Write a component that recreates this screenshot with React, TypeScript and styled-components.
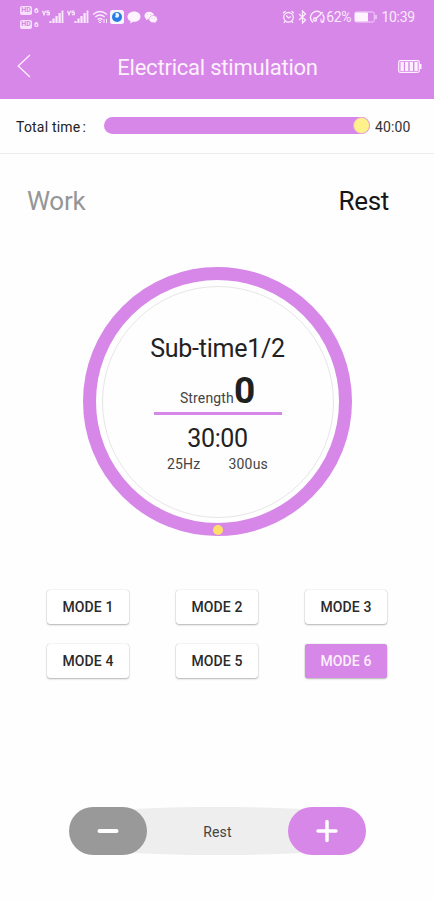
import React from "react";
import styled, { createGlobalStyle } from "styled-components";

const purple = "#d687e7";

const GlobalStyle = createGlobalStyle`
  * { box-sizing: border-box; }
  body { margin: 0; background: #fefefe; font-family: Roboto, "Noto Sans", sans-serif; }
  button { font-family: inherit; border: 0; padding: 0; }
`;

const Screen = styled.main`
  display: flex;
  flex-direction: column;
  width: 434px;
  height: 900px;
  overflow: hidden;
  background: #fefefe;
  color: #222;
`;

const StatusBar = styled.div`
  display: flex;
  justify-content: space-between;
  height: 34px;
  padding: 0 19px 0 20px;
  background: ${purple};
  color: #fbeafd;
`;

const StatusGroup = styled.div`
  display: flex;
  align-items: center;
  height: 34px;
`;

const StatusText = styled.span<{ $gap?: number }>`
  font-size: 14px;
  line-height: 34px;
  letter-spacing: -0.25px;
  margin-left: ${(p) => p.$gap ?? 0}px;
`;

const SimBadges = styled.div`
  display: flex;
  flex-direction: column;
  gap: 5px;
  width: 20px;
`;

const SimRow = styled.div`
  display: flex;
  align-items: center;
  gap: 2px;
  height: 9px;
  font-size: 8px;
  line-height: 9px;
  font-weight: 700;
`;

const SimTag = styled.span`
  width: 12px;
  height: 9px;
  border-radius: 2px;
  background: #f8dffb;
  color: ${purple};
  text-align: center;
  font-size: 7px;
`;

const Header = styled.header`
  display: grid;
  grid-template-columns: 60px 1fr 60px;
  align-items: center;
  height: 65px;
  flex: none;
  background: ${purple};
  color: #fdf1fe;
`;

const BackButton = styled.button`
  display: flex;
  height: 24px;
  margin-top: -1px;
  padding-left: 17px;
  background: none;
  color: inherit;
`;

const Title = styled.h1`
  margin: 2px 0 0;
  padding-left: 1px;
  font-size: 22px;
  line-height: 28px;
  font-weight: 400;
  letter-spacing: -0.21px;
  text-align: center;
  white-space: nowrap;
`;

const HeaderBattery = styled.div`
  display: flex;
  padding-left: 24px;
`;

const TotalTime = styled.section`
  display: flex;
  align-items: center;
  height: 55px;
  flex: none;
  padding: 0 23px 0 16px;
  border-bottom: 1px solid #ececec;
  font-size: 14px;
`;

const TotalLabel = styled.span`
  width: 88px;
  padding-top: 2px;
  letter-spacing: 0.2px;
`;

const Colon = styled.span`
  margin-left: 2px;
`;

const Track = styled.div`
  display: flex;
  align-items: center;
  justify-content: flex-end;
  width: 266px;
  height: 17px;
  margin-top: -2px;
  border-radius: 9px;
  background: ${purple};
`;

const Knob = styled.div`
  width: 17px;
  height: 17px;
  border: 1px solid #e7a9cd;
  border-radius: 50%;
  background: #fff28d;
`;

const TotalValue = styled.span`
  padding: 2px 0 0 5px;
  letter-spacing: 0.15px;
  color: #333;
`;

const Phases = styled.section`
  display: flex;
  justify-content: space-between;
  height: 30px;
  margin-top: 32px;
  padding: 0 45px 0 27px;
`;

const Phase = styled.span<{ $active?: boolean }>`
  font-size: 26px;
  line-height: 30px;
  letter-spacing: -0.3px;
  color: ${(p) => (p.$active ? "#161616" : "#969696")};
`;

const Dial = styled.section`
  display: flex;
  position: relative;
  width: 269px;
  height: 269px;
  flex: none;
  margin: 51px 0 0 83px;
  padding: 5.5px;
  border: 13px solid ${purple};
  border-radius: 50%;
`;

const DialFace = styled.div`
  display: flex;
  flex-direction: column;
  align-items: center;
  width: 232px;
  height: 232px;
  padding-top: 47px;
  border: 1px solid #e6e6e6;
  border-radius: 50%;
`;

const DialMarker = styled.i`
  position: absolute;
  bottom: -11.5px;
  left: 116.5px;
  width: 10px;
  height: 10px;
  border-radius: 50%;
  background: #ffdf68;
`;

const SubTime = styled.div`
  font-size: 25px;
  line-height: 30px;
  letter-spacing: -0.25px;
`;

const Strength = styled.div`
  display: flex;
  align-items: baseline;
  justify-content: center;
  width: 128px;
  height: 51px;
  border-bottom: 3px solid ${purple};
  font-size: 14px;
  letter-spacing: 0.15px;
  color: #444;
`;

const StrengthValue = styled.strong`
  font-size: 37px;
  line-height: 53px;
  font-weight: 700;
  letter-spacing: 0;
  color: #202020;
`;

const Remaining = styled.div`
  margin-top: 9px;
  font-size: 25px;
  line-height: 30px;
  letter-spacing: -0.4px;
`;

const Params = styled.div`
  display: flex;
  gap: 28px;
  margin-top: 1px;
  font-size: 14px;
  line-height: 18px;
  letter-spacing: 0.2px;
  color: #444;
`;

const ModeGrid = styled.section`
  display: grid;
  grid-template-columns: repeat(3, 82px);
  grid-auto-rows: 34px;
  column-gap: 47px;
  row-gap: 20px;
  margin: 53.5px 0 0 47px;
`;

const ModeButton = styled.button<{ $selected: boolean }>`
  border-radius: 3px;
  background: ${(p) => (p.$selected ? purple : "#fff")};
  color: ${(p) => (p.$selected ? "#fdf1fe" : "#2a2a2a")};
  box-shadow: 0 1px 2px rgba(0, 0, 0, 0.28), 0 0 1px rgba(0, 0, 0, 0.28);
  font-size: 14px;
  line-height: 34px;
  font-weight: 500;
  letter-spacing: 0.1px;
`;

const Stepper = styled.section`
  display: flex;
  justify-content: space-between;
  position: relative;
  width: 297px;
  height: 48px;
  margin: 129.5px 0 0 69px;
`;

const StepperBody = styled.div`
  display: flex;
  flex: 1;
  justify-content: center;
  margin: 0 -24px;
  background: #eee;
  border-radius: 50% / 4px;
  font-size: 14px;
  line-height: 50px;
  letter-spacing: 0.2px;
  color: #444;
`;

const StepButton = styled.button<{ $tone: string }>`
  display: flex;
  align-items: center;
  justify-content: center;
  position: relative;
  width: 78px;
  height: 48px;
  z-index: 1;
  border-radius: 24px;
  background: ${(p) => p.$tone};
`;

const Icon = styled.svg<{ $gap?: number }>`
  display: block;
  flex: none;
  margin-left: ${(p) => p.$gap ?? 0}px;
`;

const Sim = () => (
  <SimRow>
    <SimTag>HD</SimTag>
    <span>6</span>
  </SimRow>
);

const Signal = ({ gap }: { gap: number }) => (
  <Icon $gap={gap} width="22" height="14" viewBox="0 0 22 14" fill="#fbeafd">
    <path d="M.5 .7l1.500 4L3.500 .7M7.500 1H5V2.700h2.300v2H4.800" fill="none" stroke="#fbeafd" strokeWidth="1.200" />
    <path d="M7.500 11h2v2h-2zM10.400 8.500h2.200V13h-2.200zM13.400 6h2.200v7h-2.200zM16.500 3h2.200v10h-2.200zM19.600 .5h1.800V13h-1.800z" />
  </Icon>
);

const modes = [1, 2, 3, 4, 5, 6];

export default function App() {
  return (
    <>
      <GlobalStyle />
      <Screen>
        <StatusBar>
          <StatusGroup>
            <SimBadges>
              <Sim />
              <Sim />
            </SimBadges>
            <Signal gap={2} />
            <Signal gap={3} />
            <Icon $gap={3} width="16" height="14" viewBox="0 0 16 14" fill="none" stroke="#fbeafd" strokeWidth="1.5">
              <path d="M1 4.5Q8-1.5 15 4.5M3.3 7Q8 3 12.7 7M5.6 9.5Q8 7.5 10.4 9.5" />
              <path d="M8 10l1.5 1.5L8 13l-1.5-1.5zM12 9v4M14.5 9v4" strokeWidth="1" />
            </Icon>
            <Icon $gap={2} width="14" height="14" viewBox="0 0 14 14">
              <rect width="14" height="14" rx="2.5" fill="#f8f5ff" />
              <circle cx="7" cy="7" r="5" fill="#277de4" />
              <path d="M5.500 3.500Q6 2 8.500 3.500Q10 6 8 7.500Q5.500 8 4.800 6.500Q6 6 5.500 3.500" fill="#e9f5ff" />
            </Icon>
            <Icon $gap={3} width="14" height="13" viewBox="0 0 14 13" fill="#fff3ff">
              <path d="M7 .5C3.300.5.5 2.800.5 5.700c0 2 1.200 3.600 3.200 4.500L3 12.500l3.200-1.700c4 .3 7.300-2 7.300-5.100S10.700.5 7 .5z" />
            </Icon>
            <Icon $gap={3} width="14" height="13" viewBox="0 0 14 13">
              <path d="M5.2.8C2.500.8.5 2.500.5 4.700.5 6 1.200 7 2.200 7.700L1.800 9.200l1.900-.9c3.500.6 6.300-1 6.300-3.600C10 2.500 7.900.8 5.200.8z" fill="#fff3ff" />
              <path d="M9.300 4.500C7 4.500 5 6.200 5 8.200s2 3.600 4.300 3.600l1-.1 1.700.8-.3-1.400c1.100-.7 1.800-1.700 1.800-2.900 0-2-1.900-3.700-4.200-3.700z" fill="#fff3ff" stroke={purple} strokeWidth=".6" />
              <path d="M3.300 3.500h1M6.300 3.500h1M7.500 7.500h.8M10 7.500h.8" stroke={purple} strokeWidth=".6" />
            </Icon>
          </StatusGroup>
          <StatusGroup>
            <Icon width="13" height="14" viewBox="0 0 13 14" fill="none" stroke="#fbeafd" strokeWidth="1.3">
              <circle cx="6.500" cy="7.300" r="4.800" />
              <path d="M1 3.200L3.500 1M12 3.200L9.500 1M4.300 5.500L6.500 8l2.500-1.500M3 11.200L2 13M10 11.200l1 1.800" />
            </Icon>
            <Icon $gap={3} width="9" height="14" viewBox="0 0 9 14" fill="none" stroke="#fbeafd" strokeWidth="1.300">
              <path d="M1 4l6.500 6L4.500 13V1l3 3L1 10" />
            </Icon>
            <Icon $gap={2} width="17" height="14" viewBox="0 0 17 14" fill="none" stroke="#fbeafd" strokeWidth="1.500" strokeLinecap="round">
              <path d="M3.500 12C.5 9 .8 4.800 4.200 2.500 6.500 1 9.500 1 11.500 2.500M14 5c1.500 2.500 1 5.500-1 7.200M7 8.500l6.500-6" />
              <circle cx="6" cy="9.500" r="1.500" />
              <path d="M12 9v3h3" strokeWidth="1" />
            </Icon>
            <StatusText $gap={0}>62%</StatusText>
            <Icon $gap={3} width="24" height="12" viewBox="0 0 24 12">
              <rect x=".75" y="1" width="19.500" height="10" rx="1.500" fill="none" stroke="#f3d2f8" />
              <rect x="1" y="1.500" width="13" height="9" rx="1" fill="#fff3ff" />
              <path d="M22 4v4" stroke="#f3d2f8" strokeWidth="1.500" />
            </Icon>
            <StatusText $gap={3}>10:39</StatusText>
          </StatusGroup>
        </StatusBar>
        <Header>
          <BackButton aria-label="Back">
            <Icon width="14" height="24" viewBox="0 0 14 24" fill="none" stroke="#fff0ff" strokeWidth="1.300">
              <path d="M13 1L1.200 12 13 23" />
            </Icon>
          </BackButton>
          <Title>Electrical stimulation</Title>
          <HeaderBattery>
            <Icon width="24" height="13" viewBox="0 0 24 13">
              <rect x=".7" y=".7" width="20.600" height="11.600" rx="1.500" fill="none" stroke="#fff0ff" strokeWidth="1.200" />
              <path d="M2.500 2h3.300v9H2.500zM7 2h3.300v9H7zM11.700 2H15v9h-3.300zM16.400 2h3.300v9h-3.300z" fill="#fff0ff" />
              <path d="M22.500 4v5" stroke="#fff0ff" strokeWidth="2" />
            </Icon>
          </HeaderBattery>
        </Header>
        <TotalTime>
          <TotalLabel>Total time<Colon>:</Colon></TotalLabel>
          <Track><Knob /></Track>
          <TotalValue>40:00</TotalValue>
        </TotalTime>
        <Phases>
          <Phase>Work</Phase>
          <Phase $active>Rest</Phase>
        </Phases>
        <Dial>
          <DialFace>
            <SubTime>Sub-time1/2</SubTime>
            <Strength>
              <span>Strength</span>
              <StrengthValue>0</StrengthValue>
            </Strength>
            <Remaining>30:00</Remaining>
            <Params>
              <span>25Hz</span>
              <span>300us</span>
            </Params>
          </DialFace>
          <DialMarker />
        </Dial>
        <ModeGrid>
          {modes.map((n) => (
            <ModeButton key={n} $selected={n === 6}>MODE {n}</ModeButton>
          ))}
        </ModeGrid>
        <Stepper>
          <StepButton $tone="#999" aria-label="Decrease">
            <Icon width="22" height="22" viewBox="0 0 22 22" stroke="#fff" strokeWidth="4" strokeLinecap="round">
              <path d="M2.500 11h17" />
            </Icon>
          </StepButton>
          <StepperBody>Rest</StepperBody>
          <StepButton $tone={purple} aria-label="Increase">
            <Icon width="22" height="24" viewBox="0 0 22 24" stroke="#fff" strokeWidth="3.500" strokeLinecap="round">
              <path d="M2 12h18M11 2.500v19" />
            </Icon>
          </StepButton>
        </Stepper>
      </Screen>
    </>
  );
}
